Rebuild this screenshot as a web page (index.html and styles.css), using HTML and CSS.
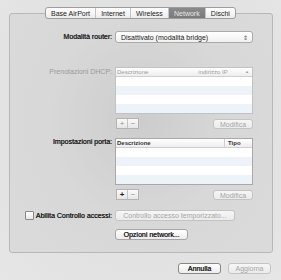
FILE: index.html
```html
<!DOCTYPE html>
<html lang="it">
  <head>
    <meta charset="UTF-8" />
    <title>Network</title>
    <link rel="stylesheet" href="styles.css">
  </head>
  <body>
    <div class="tabs">
      <span class="tab">Base AirPort</span>
      <span class="tab">Internet</span>
      <span class="tab">Wireless</span>
      <span class="tab active">Network</span>
      <span class="tab">Dischi</span>
    </div>

    <div class="panel">
      <div class="row router">
        <label class="label">Modalità router:</label>
        <div class="select">
          <span>Disattivato (modalità bridge)</span>
          <span class="arrows">&#8661;</span>
        </div>
      </div>

      <div class="row dhcp">
        <label class="label dim">Prenotazioni DHCP:</label>
        <div class="table dim-table">
          <div class="thead">
            <span>Descrizione</span>
            <span class="col2">indirizzo IP</span>
            <span class="sort">&#9650;</span>
          </div>
          <div class="trow"></div>
          <div class="trow alt"></div>
          <div class="trow"></div>
          <div class="trow alt"></div>
        </div>
      </div>
      <div class="row tools">
        <span></span>
        <div class="toolbar">
          <div class="pm"><span>+</span><span>&minus;</span></div>
          <button class="btn disabled">Modifica</button>
        </div>
      </div>

      <div class="row ports">
        <label class="label">Impostazioni porta:</label>
        <div class="table">
          <div class="thead bold">
            <span>Descrizione</span>
            <span class="col3">Tipo</span>
          </div>
          <div class="trow"></div>
          <div class="trow alt"></div>
          <div class="trow"></div>
          <div class="trow alt"></div>
        </div>
      </div>
      <div class="row tools">
        <span></span>
        <div class="toolbar">
          <div class="pm"><span class="on">+</span><span>&minus;</span></div>
          <button class="btn disabled">Modifica</button>
        </div>
      </div>

      <div class="row access">
        <label class="label check"><span class="box"></span>Abilita Controllo accessi:</label>
        <div><button class="btn disabled wide">Controllo accesso temporizzato...</button></div>
      </div>

      <div class="row options">
        <span></span>
        <div><button class="btn">Opzioni network...</button></div>
      </div>
    </div>

    <div class="footer">
      <button class="btn strong">Annulla</button>
      <button class="btn disabled">Aggiorna</button>
    </div>
  </body>
</html>
```

FILE: styles.css
```css
body {
  margin: 0;
  width: 281px;
  height: 280px;
  font-family: "Liberation Sans", Arial, sans-serif;
  font-size: 7px;
  color: #222;
  background: radial-gradient(ellipse at 140px 120px, #cfcfcf 0, #e0e0e0 45%, #e6e6e6 100%);
  overflow: hidden;
}

.tabs {
  position: relative;
  z-index: 1;
  display: flex;
  width: 191px;
  height: 12px;
  margin: 7px 0 0 45px;
  border: 1px solid #9d9d9d;
  border-radius: 3px;
  background: linear-gradient(#ffffff, #ececec);
  box-sizing: border-box;
  overflow: hidden;
}

.tab {
  display: flex;
  align-items: center;
  justify-content: center;
  border-right: 1px solid #c4c4c4;
  padding: 0 4px;
  flex: auto;
  white-space: nowrap;
}

.tab:last-child {
  border-right: none;
}

.tab.active {
  background: linear-gradient(#8a8a8a, #7a7a7a);
  color: #e8e8e8;
}

.panel {
  margin: -6px 8px 0 9px;
  height: 240px;
  box-sizing: border-box;
  border: 1px solid #b8b8b8;
  border-radius: 3px;
  background: rgba(200, 200, 200, 0.35);
  padding-top: 17px;
}

.row {
  display: grid;
  grid-template-columns: 102px 138px;
  column-gap: 3px;
}

.label {
  text-align: right;
  color: #1e1e1e;
  line-height: 12px;
  white-space: nowrap;
  text-shadow: 0.3px 0 0 #1e1e1e;
}

.label.dim {
  color: #9a9a9a;
  text-shadow: none;
}

.select {
  display: flex;
  justify-content: space-between;
  align-items: center;
  height: 12px;
  padding: 0 4px 0 5px;
  box-sizing: border-box;
  border: 1px solid #aaa;
  border-radius: 3px;
  background: linear-gradient(#fff, #f0f0f0);
}

.arrows {
  font-size: 6px;
  color: #555;
}

.dhcp {
  margin-top: 24px;
}

.dhcp .label {
  line-height: 9px;
}

.table {
  height: 47px;
  border: 1px solid #a9a9a9;
  background: #fff;
  box-sizing: border-box;
  overflow: hidden;
}

.dim-table {
  border-color: #c2c2c2;
  color: #9c9c9c;
}

.thead {
  position: relative;
  display: flex;
  height: 8px;
  line-height: 8px;
  font-size: 6px;
  padding-left: 1px;
  border-bottom: 1px solid #cfcfcf;
  background: linear-gradient(#fff, #ededed);
}

.thead.bold {
  font-weight: bold;
  color: #333;
}

.col2 {
  margin-left: 50px;
}

.col3 {
  margin-left: auto;
  width: 24px;
  padding-left: 3px;
  border-left: 1px solid #cfcfcf;
}

.sort {
  margin-left: auto;
  padding-right: 3px;
  font-size: 4px;
}

.trow {
  height: 9px;
}

.trow.alt {
  background: #eef3fa;
}

.tools {
  margin-top: 4px;
}

.toolbar {
  display: flex;
  justify-content: space-between;
  align-items: center;
}

.pm {
  display: flex;
  margin-left: 1px;
  height: 9px;
  border: 1px solid #b4b4b4;
  background: linear-gradient(#fafafa, #e6e6e6);
}

.pm span {
  width: 10px;
  line-height: 9px;
  text-align: center;
  color: #9a9a9a;
  font-size: 8px;
}

.pm span:first-child {
  border-right: 1px solid #c4c4c4;
}

.pm span.on {
  color: #222;
  font-weight: bold;
}

.btn {
  height: 11px;
  padding: 0;
  font-family: inherit;
  font-size: 7px;
  color: #222;
  border: 1px solid #a6a6a6;
  border-radius: 3px;
  background: linear-gradient(#ffffff, #ececec);
  line-height: 9px;
  white-space: nowrap;
}

.btn.disabled {
  color: #a6a6a6;
  border-color: #c4c4c4;
  background: linear-gradient(#f6f6f6, #ebebeb);
}

.toolbar .btn {
  width: 40px;
  height: 10px;
}

.ports {
  margin-top: 9px;
}

.ports .label {
  line-height: 8px;
}

.access {
  margin-top: 10px;
}

.check {
  display: flex;
  align-items: center;
  justify-content: flex-end;
  gap: 2px;
  line-height: 11px;
}

.box {
  width: 7px;
  height: 7px;
  border: 1px solid #888;
  border-radius: 1px;
  background: linear-gradient(#fff, #e8e8e8);
}

.wide {
  width: 120px;
}

.options {
  margin-top: 8px;
}

.options .btn {
  width: 73px;
  text-shadow: 0.3px 0 0 #222;
}

.footer {
  display: flex;
  justify-content: flex-end;
  gap: 7px;
  margin: 10px 10px 0 0;
}

.footer .btn {
  width: 43px;
  height: 11px;
}

.footer .strong {
  border-color: #888;
  text-shadow: 0.3px 0 0 #222;
}
```
